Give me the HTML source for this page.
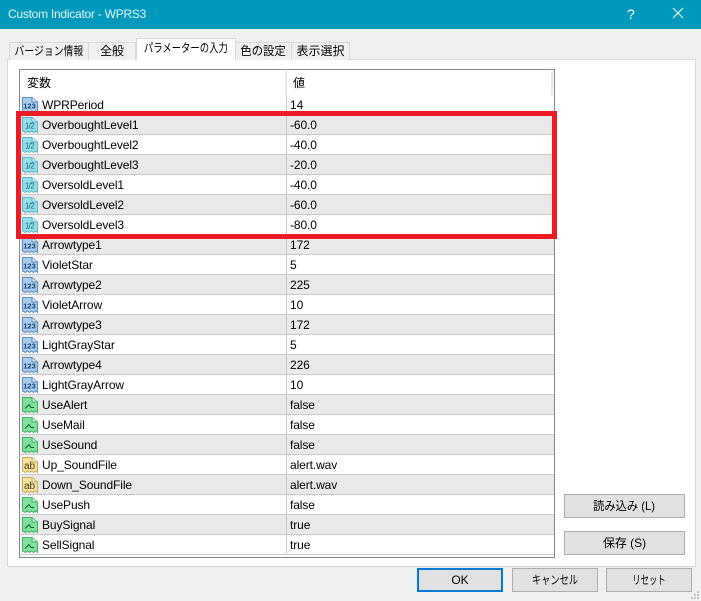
<!DOCTYPE html>
<html lang="ja"><head><meta charset="utf-8"><title>Custom Indicator - WPRS3</title>
<style>
html,body{margin:0;padding:0}
body{width:701px;height:601px;overflow:hidden;position:relative;background:#f0f0f0;font:12px "Liberation Sans","Noto Sans CJK JP",sans-serif;color:#000}
div{position:absolute;box-sizing:border-box}
#tb{left:0;top:0;width:701px;height:29px;background:#0099bc;color:#e6f5f9;font-size:12px;letter-spacing:-.25px;line-height:28px;padding-left:8px}
.tab{top:42px;height:18px;background:#f0f0f0;border:1px solid #d9d9d9;border-bottom:0;text-align:center;line-height:17px;white-space:nowrap;font-size:12px}
.s{display:inline-block;transform:scaleX(.8);transform-origin:center;margin:0 -30px}
#panel{left:7px;top:59px;width:689px;height:508px;background:#fff;border:1px solid #d9d9d9}
#atab{left:136px;top:38px;width:100px;height:22px;background:#fff;border:1px solid #d9d9d9;border-bottom:0;text-align:center;line-height:19px;font-size:12px;white-space:nowrap}
#list{left:19px;top:69px;width:536px;height:489px;background:#fff;border:1px solid #828790}
.r{left:1px;width:533px;height:20px;border-bottom:1px solid #c8c8c8;line-height:21px;white-space:nowrap;letter-spacing:-.1px}
.g{background:#e9e9e9}
.n{left:21px;top:0}
.v{left:269px;top:0}
.c{left:265px;top:0;width:1px;height:20px;background:#c8c8c8}
.r svg{position:absolute;left:0;top:1px}
.b{background:#e1e1e1;border:1px solid #adadad;text-align:center;color:#000;white-space:nowrap}
</style></head><body>
<svg width="0" height="0" style="position:absolute"><defs>
<symbol id="i" viewBox="0 0 18 18"><path d="M1.5 1.5H11L16.5 6V16.5L14.5 15L12.5 16.5L10.5 15L8.5 16.5L6.5 15L4.5 16.5L1.5 15Z" fill="currentColor" stroke="var(--s)"/><path d="M11 1.5V6H16.5" fill="#fff" fill-opacity=".5" stroke="var(--s)"/></symbol>
</defs></svg>
<div id="tb">Custom Indicator - WPRS3</div>
<svg style="position:absolute;left:672px;top:7px" width="12" height="12"><path d="M1 1L11 11M11 1L1 11" stroke="#fff" stroke-width="1"/></svg>
<div style="left:627px;top:5px;color:#fff;font-size:14px;line-height:18px">?</div>
<div id="panel"></div>
<div class="tab" style="left:9px;width:80px"><span class="s" style="transform:scaleX(.82)">バージョン情報</span></div>
<div class="tab" style="left:88px;width:48px">全般</div>
<div class="tab" style="left:235px;width:57px"><span class="s" style="transform:scaleX(.95)">色の設定</span></div>
<div class="tab" style="left:291px;width:59px">表示選択</div>
<div id="atab"><span class="s" style="transform:scaleX(.78)">パラメーターの入力</span></div>
<div id="list">
<div style="left:7px;top:5px;line-height:16px">変数</div>
<div style="left:273px;top:5px;line-height:16px">値</div>
<div style="left:265px;top:1px;width:2px;height:24px;background:#e8e8e8"></div>
<div style="left:531px;top:1px;width:2px;height:24px;background:#e8e8e8"></div>

<div class="r" style="top:25px"><svg width="18" height="18" style="color:#a9cdea;--s:#5c8fc0"><use href="#i"/><text x="8.5" y="12.5" font-size="7.5" font-weight="700" fill="#123f7a" text-anchor="middle" letter-spacing="0">123</text></svg><div class="n">WPRPeriod</div><div class="c"></div><div class="v">14</div></div>
<div class="r g" style="top:45px"><svg width="18" height="18" style="color:#93dfe8;--s:#5fb6c9"><use href="#i"/><text x="8.5" y="12.5" font-size="8" fill="#14607a" text-anchor="middle" letter-spacing="-.6">1/2</text></svg><div class="n">OverboughtLevel1</div><div class="c"></div><div class="v">-60.0</div></div>
<div class="r" style="top:65px"><svg width="18" height="18" style="color:#93dfe8;--s:#5fb6c9"><use href="#i"/><text x="8.5" y="12.5" font-size="8" fill="#14607a" text-anchor="middle" letter-spacing="-.6">1/2</text></svg><div class="n">OverboughtLevel2</div><div class="c"></div><div class="v">-40.0</div></div>
<div class="r g" style="top:85px"><svg width="18" height="18" style="color:#93dfe8;--s:#5fb6c9"><use href="#i"/><text x="8.5" y="12.5" font-size="8" fill="#14607a" text-anchor="middle" letter-spacing="-.6">1/2</text></svg><div class="n">OverboughtLevel3</div><div class="c"></div><div class="v">-20.0</div></div>
<div class="r" style="top:105px"><svg width="18" height="18" style="color:#93dfe8;--s:#5fb6c9"><use href="#i"/><text x="8.5" y="12.5" font-size="8" fill="#14607a" text-anchor="middle" letter-spacing="-.6">1/2</text></svg><div class="n">OversoldLevel1</div><div class="c"></div><div class="v">-40.0</div></div>
<div class="r g" style="top:125px"><svg width="18" height="18" style="color:#93dfe8;--s:#5fb6c9"><use href="#i"/><text x="8.5" y="12.5" font-size="8" fill="#14607a" text-anchor="middle" letter-spacing="-.6">1/2</text></svg><div class="n">OversoldLevel2</div><div class="c"></div><div class="v">-60.0</div></div>
<div class="r" style="top:145px"><svg width="18" height="18" style="color:#93dfe8;--s:#5fb6c9"><use href="#i"/><text x="8.5" y="12.5" font-size="8" fill="#14607a" text-anchor="middle" letter-spacing="-.6">1/2</text></svg><div class="n">OversoldLevel3</div><div class="c"></div><div class="v">-80.0</div></div>
<div class="r g" style="top:165px"><svg width="18" height="18" style="color:#a9cdea;--s:#5c8fc0"><use href="#i"/><text x="8.5" y="12.5" font-size="7.5" font-weight="700" fill="#123f7a" text-anchor="middle" letter-spacing="0">123</text></svg><div class="n">Arrowtype1</div><div class="c"></div><div class="v">172</div></div>
<div class="r" style="top:185px"><svg width="18" height="18" style="color:#a9cdea;--s:#5c8fc0"><use href="#i"/><text x="8.5" y="12.5" font-size="7.5" font-weight="700" fill="#123f7a" text-anchor="middle" letter-spacing="0">123</text></svg><div class="n">VioletStar</div><div class="c"></div><div class="v">5</div></div>
<div class="r g" style="top:205px"><svg width="18" height="18" style="color:#a9cdea;--s:#5c8fc0"><use href="#i"/><text x="8.5" y="12.5" font-size="7.5" font-weight="700" fill="#123f7a" text-anchor="middle" letter-spacing="0">123</text></svg><div class="n">Arrowtype2</div><div class="c"></div><div class="v">225</div></div>
<div class="r" style="top:225px"><svg width="18" height="18" style="color:#a9cdea;--s:#5c8fc0"><use href="#i"/><text x="8.5" y="12.5" font-size="7.5" font-weight="700" fill="#123f7a" text-anchor="middle" letter-spacing="0">123</text></svg><div class="n">VioletArrow</div><div class="c"></div><div class="v">10</div></div>
<div class="r g" style="top:245px"><svg width="18" height="18" style="color:#a9cdea;--s:#5c8fc0"><use href="#i"/><text x="8.5" y="12.5" font-size="7.5" font-weight="700" fill="#123f7a" text-anchor="middle" letter-spacing="0">123</text></svg><div class="n">Arrowtype3</div><div class="c"></div><div class="v">172</div></div>
<div class="r" style="top:265px"><svg width="18" height="18" style="color:#a9cdea;--s:#5c8fc0"><use href="#i"/><text x="8.5" y="12.5" font-size="7.5" font-weight="700" fill="#123f7a" text-anchor="middle" letter-spacing="0">123</text></svg><div class="n">LightGrayStar</div><div class="c"></div><div class="v">5</div></div>
<div class="r g" style="top:285px"><svg width="18" height="18" style="color:#a9cdea;--s:#5c8fc0"><use href="#i"/><text x="8.5" y="12.5" font-size="7.5" font-weight="700" fill="#123f7a" text-anchor="middle" letter-spacing="0">123</text></svg><div class="n">Arrowtype4</div><div class="c"></div><div class="v">226</div></div>
<div class="r" style="top:305px"><svg width="18" height="18" style="color:#a9cdea;--s:#5c8fc0"><use href="#i"/><text x="8.5" y="12.5" font-size="7.5" font-weight="700" fill="#123f7a" text-anchor="middle" letter-spacing="0">123</text></svg><div class="n">LightGrayArrow</div><div class="c"></div><div class="v">10</div></div>
<div class="r g" style="top:325px"><svg width="18" height="18" style="color:#7fe29a;--s:#45b06c"><use href="#i"/><path d="M4 12.5L8 8.5L10 11.5H13" fill="none" stroke="#0f5f2f"/></svg><div class="n">UseAlert</div><div class="c"></div><div class="v">false</div></div>
<div class="r" style="top:345px"><svg width="18" height="18" style="color:#7fe29a;--s:#45b06c"><use href="#i"/><path d="M4 12.5L8 8.5L10 11.5H13" fill="none" stroke="#0f5f2f"/></svg><div class="n">UseMail</div><div class="c"></div><div class="v">false</div></div>
<div class="r g" style="top:365px"><svg width="18" height="18" style="color:#7fe29a;--s:#45b06c"><use href="#i"/><path d="M4 12.5L8 8.5L10 11.5H13" fill="none" stroke="#0f5f2f"/></svg><div class="n">UseSound</div><div class="c"></div><div class="v">false</div></div>
<div class="r" style="top:385px"><svg width="18" height="18" style="color:#f3e3a0;--s:#c4ac55"><use href="#i"/><text x="8.5" y="13" font-size="10" fill="#4a3a10" text-anchor="middle" letter-spacing="0">ab</text></svg><div class="n">Up_SoundFile</div><div class="c"></div><div class="v">alert.wav</div></div>
<div class="r g" style="top:405px"><svg width="18" height="18" style="color:#f3e3a0;--s:#c4ac55"><use href="#i"/><text x="8.5" y="13" font-size="10" fill="#4a3a10" text-anchor="middle" letter-spacing="0">ab</text></svg><div class="n">Down_SoundFile</div><div class="c"></div><div class="v">alert.wav</div></div>
<div class="r" style="top:425px"><svg width="18" height="18" style="color:#7fe29a;--s:#45b06c"><use href="#i"/><path d="M4 12.5L8 8.5L10 11.5H13" fill="none" stroke="#0f5f2f"/></svg><div class="n">UsePush</div><div class="c"></div><div class="v">false</div></div>
<div class="r g" style="top:445px"><svg width="18" height="18" style="color:#7fe29a;--s:#45b06c"><use href="#i"/><path d="M4 12.5L8 8.5L10 11.5H13" fill="none" stroke="#0f5f2f"/></svg><div class="n">BuySignal</div><div class="c"></div><div class="v">true</div></div>
<div class="r" style="top:465px"><svg width="18" height="18" style="color:#7fe29a;--s:#45b06c"><use href="#i"/><path d="M4 12.5L8 8.5L10 11.5H13" fill="none" stroke="#0f5f2f"/></svg><div class="n">SellSignal</div><div class="c"></div><div class="v">true</div></div>
</div>
<div style="left:16px;top:111px;width:541px;height:128px;border:5px solid #ed1c24"></div>
<div class="b" style="left:564px;top:494px;width:121px;height:24px;line-height:22px"><span class="s" style="transform:scaleX(.94)">読み込み (L)</span></div>
<div class="b" style="left:564px;top:531px;width:121px;height:24px;line-height:22px">保存 (S)</div>
<div class="b" style="left:417px;top:568px;width:86px;height:24px;line-height:21px;border:2px solid #0078d7">OK</div>
<div class="b" style="left:512px;top:568px;width:86px;height:24px;line-height:22px"><span class="s" style="transform:scaleX(.77)">キャンセル</span></div>
<div class="b" style="left:606px;top:568px;width:86px;height:24px;line-height:22px"><span class="s" style="transform:scaleX(.7)">リセット</span></div>
<svg style="position:absolute;left:690px;top:590px" width="10" height="10"><path d="M7 1h2v2H7zM4 4h2v2H4zM7 4h2v2H7zM1 7h2v2H1zM4 7h2v2H4zM7 7h2v2H7z" fill="#c4c4c4"/></svg>
</body></html>
